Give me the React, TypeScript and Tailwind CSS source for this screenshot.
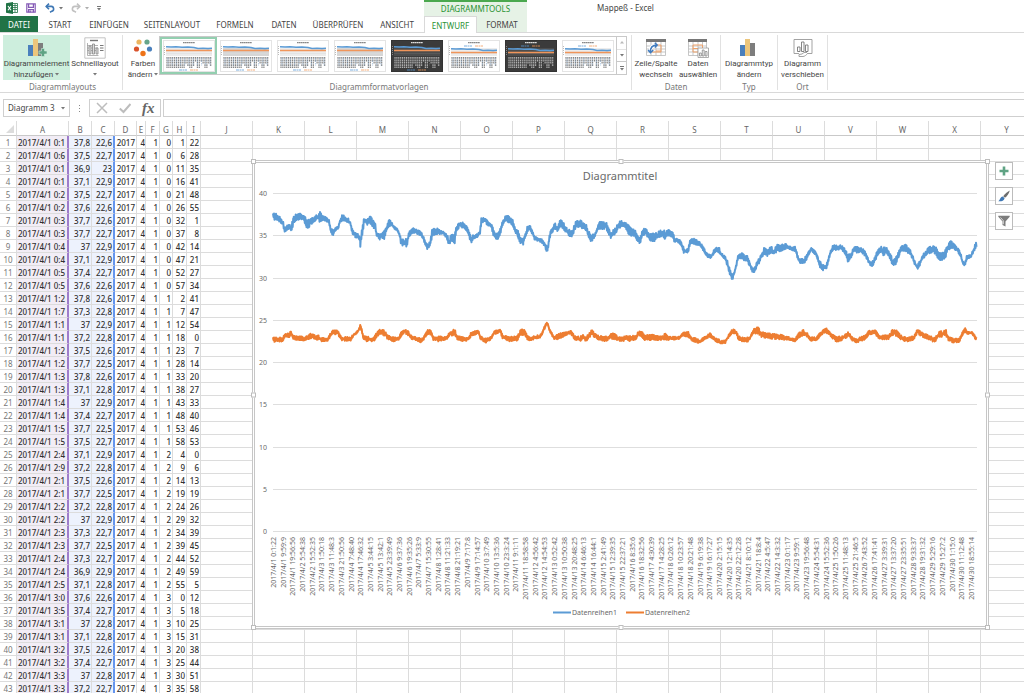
import React from 'react';
import clsx from 'clsx';

type Point = [number, number, number];

const TABS = [
    { label: 'START', width: 'w-11' },
    { label: 'EINFÜGEN', width: 'w-[54px]' },
    { label: 'SEITENLAYOUT', width: 'w-[72px]' },
    { label: 'FORMELN', width: 'w-[54px]' },
    { label: 'DATEN', width: 'w-11' },
    { label: 'ÜBERPRÜFEN', width: 'w-16' },
    { label: 'ANSICHT', width: 'w-[54px]' },
];

// Temperature, second temperature, hour, minute, second
const READINGS = `37,8 22,6 0 1 22|37,5 22,7 0 6 28|36,9 23 0 11 35|37,1 22,9 0 16 41|37,5 22,7 0 21 48
37,6 22,6 0 26 55|37,7 22,6 0 32 1|37,7 22,7 0 37 8|37 22,9 0 42 14|37,1 22,9 0 47 21
37,4 22,7 0 52 27|37,6 22,6 0 57 34|37,8 22,6 1 2 41|37,3 22,8 1 7 47|37 22,9 1 12 54
37,2 22,8 1 18 0|37,5 22,6 1 23 7|37,7 22,5 1 28 14|37,8 22,6 1 33 20|37,1 22,8 1 38 27
37 22,9 1 43 33|37,4 22,7 1 48 40|37,7 22,5 1 53 46|37,5 22,7 1 58 53|37,1 22,9 2 4 0
37,2 22,8 2 9 6|37,5 22,6 2 14 13|37,7 22,5 2 19 19|37,2 22,8 2 24 26|37 22,9 2 29 32
37,3 22,7 2 34 39|37,7 22,5 2 39 45|37,3 22,7 2 44 52|36,9 22,9 2 49 59|37,1 22,8 2 55 5
37,6 22,6 3 0 12|37,4 22,7 3 5 18|37 22,8 3 10 25|37,1 22,8 3 15 31|37,5 22,6 3 20 38
37,4 22,7 3 25 44|37 22,8 3 30 51|37,2 22,7 3 35 58`
    .split(/[|\n]/)
    .map((row) => row.split(' '));

const DATA_COLUMNS = [
    { name: 'A', width: 'w-[52px]' },
    { name: 'B', width: 'w-[23px]' },
    { name: 'C', width: 'w-[23px]' },
    { name: 'D', width: 'w-[22px]' },
    { name: 'E', width: 'w-[9px]' },
    { name: 'F', width: 'w-[14px]' },
    { name: 'G', width: 'w-[13px]' },
    { name: 'H', width: 'w-[14px]' },
    { name: 'I', width: 'w-[14px]' },
];

const EMPTY_COLUMNS = [...'JKLMNOPQRSTUVWXY'];

const TIMES = [
    '1 0:1:22', '1 9:59:9', '1 19:56:56', '2 5:54:38', '2 15:52:35', '3 1:50:18', '3 11:48:3', '3 21:50:56',
    '4 7:48:40', '4 17:46:32', '5 3:44:15', '5 13:42:1', '5 23:39:49', '6 9:37:36', '6 19:35:26', '7 5:33:9',
    '7 15:30:55', '8 1:28:41', '8 11:21:33', '8 21:19:21', '9 7:17:8', '9 17:14:57', '10 3:7:49', '10 13:5:36',
    '10 23:3:24', '11 9:1:11', '11 18:58:58', '12 4:56:42', '12 14:54:53', '13 0:52:42', '13 10:50:38',
    '13 20:48:25', '14 6:46:13', '14 16:44:1', '15 2:41:49', '15 12:39:35', '15 22:37:21', '16 8:35:6',
    '16 18:32:56', '17 4:30:39', '17 14:28:25', '18 0:26:12', '18 10:23:57', '18 20:21:48', '19 6:19:38',
    '19 16:17:27', '20 2:15:15', '20 12:14:35', '20 22:12:28', '21 8:10:12', '21 18:8:4', '22 4:5:47',
    '22 14:3:32', '23 0:1:17', '23 9:59:1', '23 19:56:48', '24 5:54:31', '24 15:52:36', '25 1:50:26',
    '25 11:48:13', '25 21:46:5', '26 7:43:52', '26 17:41:41', '27 3:39:31', '27 13:37:20', '27 23:35:51',
    '28 9:33:37', '28 19:31:32', '29 5:29:16', '29 15:27:2', '30 1:15:0', '30 11:12:48', '30 18:55:14',
];

// Each entry is x:high,low. The readings swing between high and low.
const SERIES_1_A =
    '69:190,208 80:190,212 90:200,216 98:212,224 104:228,250 112:225,240 120:224,235 125:222,250 130:200,220 137:192,212 148:190,208 160:192,208 168:200,234 176:208,234 184:206,225 190:202,215 200:195,212 207:182,218 214:192,212 222:196,210 230:204,216 237:210,225 242:236,248 250:240,258 256:234,242 264:230,238 270:205,220 278:192,212 286:202,214 296:206,218 302:216,232 308:240,252 316:248,262 324:250,264 329:258,270 331:270,294 334:255,272 337:225,255 343:202,222 352:200,224 362:200,220 370:212,234 376:222,236 380:248,258 390:254,270 398:248,264 404:240,268 410:226,238 418:208,228 426:218,230 434:230,238 442:236,242 448:244,262 453:266,284 460:268,288 470:266,290 476:246,266 484:232,252 492:234,248 502:240,252 512:244,256 518:254,264 524:268,280 532:282,298 540:272,292 546:240,262 554:234,254 562:230,252 572:238,252 582:244,254 590:254,264 597:264,288 604:254,270 614:254,280 618:232,252 624:218,238 632:214,232 642:220,234 652:232,244 658:248,262 663:260,280 670:254,266 684:252,260 690:240,252 694:204,222 704:200,220 714:210,226 724:222,232 732:240,264 738:252,272 746:246,266 752:230,248 758:212,226 764:200,216 770:194,214 778:200,218 788:210,226 796:238,248 804:242,262 812:264,284 820:262,284 826:244,262 832:230,246 838:224,238 846:236,250 852:256,268 862:262,272 872:266,276 880:268,282 888:286,303 893:288,303 897:264,280 902:240,252 908:236,246 914:216,236 922:230,250 931:210,230 940:216,236 948:232,248 956:238,256 966:244,262 974:222,240 980:208,228 990:210,236 1000:218,236 1010:226,242 1016:244,264 1024:256,276 1032:252,264 1040:236,248 1048:216,236 1058:216,238 1068:216,236 1078:236,258 1084:248,268 1092:236,264 1102:222,240 1110:214,234';
const SERIES_1_B =
    '8:212,228 16:218,240 26:226,254 36:236,258 46:242,260 54:260,278 60:262,284 66:244,258 74:234,254 82:242,260 92:252,272 102:250,274 110:248,270 120:242,260 128:240,262 136:242,270 146:240,258 158:248,262 164:262,278 176:264,278 184:278,286 192:294,310 204:296,310 210:270,285 216:262,280 224:268,282 236:274,288 246:284,294 254:298,310 264:312,322 274:316,326 280:302,314 288:292,304 298:294,308 304:310,318 316:318,328 322:332,348 328:352,372 337:376,390 342:366,378 348:344,354 354:314,328 364:308,324 372:314,332 380:314,332 388:334,346 394:350,360 400:358,372 408:342,356 414:330,348 422:316,328 432:294,314 442:298,318 452:286,312 462:298,316 472:284,306 484:284,302 494:282,298 504:284,296 516:288,300 526:290,304 532:310,324 540:328,340 550:326,340 558:318,336 566:304,314 574:294,304 584:300,312 592:316,326 600:334,352 610:344,362 618:346,360 624:326,340 632:302,314 640:282,300 652:284,300 664:286,298 676:298,312 684:314,336 692:308,325 700:294,310 712:288,308 722:290,306 732:298,314 742:318,330 752:340,352 762:328,344 772:302,316 782:290,306 790:292,318 800:294,310 808:308,322 818:324,346 830:318,342 838:300,315 846:286,302 858:284,304 868:294,312 876:312,324 884:332,344 892:346,360 900:332,345 908:316,328 918:298,316 926:292,310 938:288,308 948:292,312 956:308,332 966:310,330 976:300,324 984:284,304 992:272,294 1000:280,296 1010:290,302 1020:304,316 1028:330,344 1034:336,350 1040:318,328 1054:314,320 1062:290,304 1070:274,290';
const SERIES_2_A =
    '69:562,576 100:562,574 104:549,562 118:550,562 123:540,552 128:556,566 140:558,570 165:560,572 180:550,566 195:556,566 206:556,572 215:564,574 234:564,572 240:552,564 250:540,554 264:542,552 270:556,566 280:560,574 302:562,572 308:554,562 320:544,550 326:538,544 331:522,532 335:535,545 340:558,566 350:560,574 372:562,574 380:548,560 392:536,552 404:542,558 412:556,566 430:562,574 446:562,572 453:546,560 463:536,552 474:542,556 482:556,566 500:560,572 515:566,578 524:556,564 532:540,552 544:540,554 550:560,570 565:560,574 590:558,568 597:544,560 614:538,554 622:558,568 640:562,574 655:562,572 664:546,558 685:542,550 692:558,568 708:566,578 724:560,568 733:540,554 750:536,546 758:556,566 778:560,574 802:558,572 812:538,554 824:540,556 832:558,568 845:562,574 852:556,566 870:556,564 878:542,550 886:522,532 892:514,522 898:535,542 908:552,560 914:558,570 930:550,566 940:548,560 962:542,552 974:558,568 990:560,574 1000:554,564 1008:562,574 1024:538,556 1034:550,562 1044:556,568 1065:560,574 1085:550,566 1095:552,568 1105:562,572';
const SERIES_2_B =
    '8:560,574 24:556,574 46:558,570 54:544,560 66:546,562 74:556,570 100:554,570 120:560,570 136:550,568 144:560,570 176:560,568 190:548,558 206:546,562 214:560,572 240:570,580 254:560,568 270:550,560 282:562,572 300:570,580 316:572,580 326:554,562 336:538,550 348:540,550 354:556,568 370:564,576 388:562,574 396:546,556 402:534,550 414:532,552 426:546,562 440:550,564 470:552,568 500:558,570 525:568,576 534:550,564 550:540,556 562:546,560 572:562,572 590:560,572 604:544,554 618:534,548 632:550,560 650:560,576 668:558,570 684:546,560 696:560,572 710:566,578 736:556,568 748:540,552 768:542,556 780:556,568 808:554,568 816:540,556 832:542,558 842:556,568 860:564,576 880:558,570 892:538,550 906:548,560 926:556,568 944:564,578 956:546,562 978:540,558 986:560,572 1000:566,578 1018:566,576 1028:545,555 1036:534,544 1042:546,552 1056:546,551 1066:558,568 1070:562,572';

const parse = (text: string, offset: number): Point[] =>
    text.split(' ').map((entry) => {
        const [x, range] = entry.split(':');
        const [high, low] = range.split(',').map(Number);
        return [Number(x) + offset, high, low];
    });

// Zigzag between the high and low bound, with a little repeatable noise
const trace = (points: Point[]) => {
    const out: string[] = [];
    let seed = 7;
    let up = true;
    for (let i = 0; i < points.length - 1; i++) {
        const [x0, h0, l0] = points[i];
        const [x1, h1, l1] = points[i + 1];
        for (let x = x0; x < x1; x += 1.5) {
            const t = (x - x0) / (x1 - x0);
            const high = h0 + (h1 - h0) * t;
            const low = l0 + (l1 - l0) * t;
            seed = (seed * 16807) % 2147483647;
            const noise = seed / 2147483647;
            const jitter = noise * noise * (low - high) * 0.5;
            const y = up ? high + jitter : low - jitter;
            out.push(`${(18 + x / 3).toFixed(1)},${((y - 39) / 3).toFixed(1)}`);
            up = !up;
        }
    }
    return out.join(' ');
};

const SERIES_1 = trace([...parse(SERIES_1_A, -69), ...parse(SERIES_1_B, 1041)]);
const SERIES_2 = trace([...parse(SERIES_2_A, -69), ...parse(SERIES_2_B, 1041)]);

const Caret = () => (
    <svg viewBox="0 0 4 3" className="inline-block h-[3px] w-1 shrink-0" fill="#777">
        <path d="M0 0h4L2 2.6z" />
    </svg>
);

const ExcelLogo = () => (
    <svg viewBox="0 0 12 12" className="h-3 w-3">
        <path d="M6 1.5h5.5v9H6z" fill="#fff" stroke="#217346" strokeWidth="0.8" />
        <path d="M7 3.5h4M7 5.5h4M7 7.5h4M9 2v8" stroke="#217346" strokeWidth="0.8" />
        <path d="M0 1.3 7 0v12L0 10.7z" fill="#217346" />
        <path d="M2 4l3 4.2M5 4L2 8.2" stroke="#fff" strokeWidth="1.1" />
    </svg>
);

const SaveIcon = () => (
    <svg viewBox="0 0 10 10" className="h-2.5 w-2.5" fill="none" stroke="#8459b5" strokeWidth="1.2">
        <path d="M.8.8h8.4v8.4H.8zM2.6.8v3.6h4.8V.8" />
        <path d="M2.6 9.2V6.6h4.8v2.6" />
        <path d="M3.6 7.4h1.2v1.8H3.6z" fill="#8459b5" stroke="none" />
    </svg>
);

const UndoIcon = ({ color, flip }: { color: string; flip?: boolean }) => (
    <svg viewBox="0 0 10 10" className={clsx('h-2.5 w-2.5', flip && '-scale-x-100')} fill="none" stroke={color} strokeWidth="1.6">
        <path d="M1.2 3.4h4.6a2.5 2.5 0 0 1 .6 5L5 9.2" />
        <path d="M4 .6 1.2 3.4 4 6.2" />
    </svg>
);

const BarsIcon = ({ plus }: { plus?: boolean }) => (
    <svg viewBox="0 0 20 20" className="h-5 w-5">
        <path d="M1 7h5v11H1z" fill="#4a80bd" />
        <path d="M6 1h5v17H6z" fill="#ecc67c" />
        <path d="M11 5h5v13h-5z" fill="#7d7d7d" />
        {plus && <path d="M12 13h2.5v-2.5h3V13H20v3h-2.5v2.5h-3V16H12z" fill="#5fa384" stroke="#cdeedd" strokeWidth="0.6" />}
    </svg>
);

const LayoutIcon = () => (
    <svg viewBox="0 0 22 22" className="h-[22px] w-[22px]" fill="none" stroke="#a0a0a0" strokeWidth="0.8">
        <path d="M.8.8h20.4v20.4H.8z" stroke="#b5b5b5" />
        <path d="M6 3.5h8" stroke="#777" strokeWidth="1.4" />
        <path d="M3.5 6v12.5h11M3 8.5h11M3 11h11M3 13.5h11" />
        <path d="M5 9h2v8H5zM8.5 7h2v10h-2zM12 11h2v6h-2z" fill="#ddd" stroke="#888" />
        <path d="M16 8.5h3.5M16 11h3.5M16 13.5h3.5" stroke="#777" strokeWidth="1.2" />
    </svg>
);

const ColorsIcon = () => (
    <svg viewBox="0 0 20 20" className="h-5 w-5">
        <circle cx="6" cy="4" r="2.6" fill="#ecb55f" />
        <circle cx="14" cy="4" r="2.6" fill="#66a58b" />
        <circle cx="3.5" cy="11" r="2.6" fill="#d9532c" />
        <circle cx="16.5" cy="11" r="2.6" fill="#4a80bd" />
        <circle cx="10" cy="15.5" r="2.7" fill="#ee7318" />
    </svg>
);

const SwitchIcon = () => (
    <svg viewBox="0 0 20 20" className="h-5 w-5" fill="none">
        <path d="M.5 3.5v14h19v-14M.5 8h19M.5 11h19M.5 14h19M5 4v13.5M10 4v13.5M15 4v13.5" stroke="#b9b9b9" strokeWidth="0.8" />
        <path d="M0 1h20v3H0z" fill="#777" />
        <path d="M6 7h9v7H6zM10 13h5" stroke="#f0a36a" />
        <path d="M4.5 13C4.5 9 6.500 7 11 7" stroke="#fff" strokeWidth="3.5" />
        <path d="M4.5 14.5C4 9.5 6.5 7 11 7M8.800 4.800 11.2 7 8.8 9.5M2 12l2.5 2.6L7.2 12" stroke="#3f7bbf" strokeWidth="1.5" />
    </svg>
);

const SelectDataIcon = () => (
    <svg viewBox="0 0 21 20" className="h-5 w-[21px]" fill="none">
        <path d="M.5 3.5v14h18v-14M.5 8h18M.5 11h18M.5 14h18M5 4v13.5M10 4v13.5M14.5 4v13.5" stroke="#b9b9b9" strokeWidth="0.8" />
        <path d="M0 1h19v3H0z" fill="#777" />
        <path d="M5 7h9.5v7H5zM5 10.5h9" stroke="#f0a36a" />
        <path d="M10 10h10.5v9.5H10z" fill="#fff" stroke="#999" strokeWidth="0.8" />
        <path d="M11.5 15h1.8v3h-1.8zM14.3 12h1.8v6h-1.8zM17.2 13.5H19V18h-1.8z" stroke="#777" strokeWidth="0.7" />
    </svg>
);

const MoveIcon = () => (
    <svg viewBox="0 0 20 20" className="h-5 w-5" fill="none" stroke="#999" strokeWidth="0.9">
        <path d="M6 15.5H1V1.5h18v14h-4" />
        <path d="M4.5 9H7v4.5H4.5zM8.5 4H11v9.5H8.5zM12.5 7H15v6.5h-2.5z" stroke="#777" />
        <path d="M6 18.5h4c1.5 0 3.5-1.5 5-3.5M6 18.5v-2l3-.5 2-1.5h3" />
    </svg>
);

type ThumbProps = { dark?: boolean; grey?: boolean; selected?: boolean; legendTop?: boolean; title: string };

const StyleThumb: React.FC<ThumbProps> = ({ dark, grey, selected, legendTop, title }) => {
    const shift = legendTop ? 'translate(0 2)' : undefined;
    return (
        <button
            aria-label={title}
            className={clsx('flex h-[37px] w-[57px] shrink-0 items-center justify-center', selected && 'border-2 border-[#93cfb0]')}
        >
            <svg viewBox="0 0 52 32" className="h-8 w-[52px] shrink-0" fill="none">
                <rect x="0.5" y="0.5" width="51" height="31" fill={dark ? '#3b3b3b' : '#fff'} stroke={dark ? '#333' : '#e4e4e4'} />
                <path d="M20 2.7h12" stroke={dark ? '#ddd' : '#888'} strokeWidth="1.2" strokeDasharray="1.7 0.3" />
                <path d="M3 8h46v8H3z" fill={dark ? '#4c4c4c' : grey ? '#d6d6d6' : '#ececec'} />
                <path d="M3 13.5h46" stroke={dark ? '#666' : '#ddd'} strokeWidth="0.5" />
                <path d="M1.5 6v10" stroke={dark ? '#888' : '#bbb'} strokeDasharray="1 1" />
                <path d="M3 6.7l5 .3 5-.3 6 .6 6-.3 6 .5 4 1 5-.3 5 .4 4-.3" transform={shift} stroke="#5b9bd5" strokeWidth="1.6" />
                <path d="M3 10.5h46" transform={shift} stroke="#f0955a" strokeWidth="1.4" />
                <g stroke={dark ? '#b0b0b0' : '#868686'} strokeWidth="1.2" strokeDasharray="1.8 0.6">
                    {Array.from({ length: 24 }, (_, i) => (
                        <path key={i} d={`M${4 + i * 1.9} 17v${i < 10 || i % 4 < 2 ? 11 : 5 + (i % 3) * 2}`} />
                    ))}
                </g>
                <g stroke={dark ? '#777' : '#7fa9d3'} strokeWidth="0.6" strokeDasharray="1.5 1">
                    {Array.from({ length: 11 }, (_, i) => (
                        <path key={i} d={`M${5 + i * 4.2} 18v8`} />
                    ))}
                </g>
                <path d={legendTop ? 'M16 6h8' : 'M16 30h8'} stroke="#5b9bd5" strokeWidth="0.8" strokeDasharray="3.5 0.5 1 0.5" />
                <path d={legendTop ? 'M27 6h8' : 'M27 30h8'} stroke="#f19a5c" strokeWidth="0.8" strokeDasharray="3.5 0.5 1 0.5" />
            </svg>
        </button>
    );
};

const RibbonButton = ({ icon, lines, caret, className }: { icon: React.ReactNode; lines: string[]; caret?: boolean; className?: string }) => (
    <button className={clsx('flex h-[45px] shrink-0 flex-col items-center whitespace-nowrap pt-[2px] font-[Roboto,sans-serif] leading-[11px]', className)}>
        <span className="flex h-[22px] items-center">{icon}</span>
        <span className="leading-[10px]">{lines[0]}</span>
        <span>
            {lines[1]} {caret && <Caret />}
        </span>
    </button>
);

const RibbonGroup = ({ label, className, children }: { label: string; className?: string; children: React.ReactNode }) => (
    <section aria-label={label} className={clsx('flex shrink-0 flex-col border-r border-[#e1e1e1]', className)}>
        <div className="flex">{children}</div>
        <div className="text-center leading-[14px] text-[#777]">{label}</div>
    </section>
);

const Handle = ({ className }: { className: string }) => (
    <span className={clsx('absolute h-[5px] w-[5px] border border-[#bdbdbd] bg-white', className)} />
);

const Chart = () => (
    <figure className="absolute left-[252px] top-[39px] h-[469px] w-[737px] border-[3px] border-double border-[#c6c6c6] bg-white">
        <svg viewBox="0 0 731 463" className="block h-full w-full font-['Noto_Sans',sans-serif]" fill="#6a6a6a">
            <text x="365" y="17" fontSize="11" textAnchor="middle">
                Diagrammtitel
            </text>
            {[40, 35, 30, 25, 20, 15, 10, 5, 0].map((value, i) => (
                <g key={value}>
                    <path d={`M18 ${30.5 + Math.round(i * 42.25)}h704`} stroke="#dedede" />
                    <text x="12" y={33 + Math.round(i * 42.25)} fontSize="7" textAnchor="end">
                        {value}
                    </text>
                </g>
            ))}
            <polyline points={SERIES_1} fill="none" stroke="#5b9bd5" strokeWidth="2" strokeLinejoin="round" />
            <polyline points={SERIES_2} fill="none" stroke="#ed7d31" strokeWidth="2" strokeLinejoin="round" />
            {TIMES.map((time, i) => (
                <text key={time} fontSize="7" textAnchor="end" transform={`translate(${21 + i * 9.694} 374) rotate(-90)`}>
                    2017/4/{time}
                </text>
            ))}
            <path d="M298 449.5h18" stroke="#5b9bd5" strokeWidth="2" />
            <text x="317" y="452" fontSize="7">Datenreihen1</text>
            <path d="M371 449.5h18" stroke="#ed7d31" strokeWidth="2" />
            <text x="390" y="452" fontSize="7">Datenreihen2</text>
        </svg>
        <Handle className="-left-1 -top-1" />
        <Handle className="-top-1 left-1/2 -translate-x-1/2" />
        <Handle className="-right-1 -top-1" />
        <Handle className="-left-1 top-1/2 -translate-y-1/2" />
        <Handle className="-right-1 top-1/2 -translate-y-1/2" />
        <Handle className="-bottom-1 -left-1" />
        <Handle className="-bottom-1 left-1/2 -translate-x-1/2" />
        <Handle className="-bottom-1 -right-1" />
    </figure>
);

const ChartTools = () => {
    const button = 'flex h-[18px] w-[18px] items-center justify-center border border-[#bcbcbc] bg-white';
    return (
        <div className="absolute left-[995px] top-[41px] flex flex-col gap-[7px]">
            <button aria-label="Diagrammelemente" className={button}>
                <svg viewBox="0 0 10 10" className="h-2.5 w-2.5">
                    <path d="M3.7.5h2.6v3.2h3.2v2.6H6.3v3.2H3.7V6.3H.5V3.7h3.2z" fill="#5fa384" />
                </svg>
            </button>
            <button aria-label="Diagrammformatvorlagen" className={button}>
                <svg viewBox="0 0 12 12" className="h-3 w-3">
                    <path d="M11.8.5C11 4 9 6 7 7.8L5.2 6.2C7 4 9 2 11.8.5z" fill="#6d6d6d" />
                    <path d="M4.8 6.5 6.6 8.2C6 11 3 11.5.3 11.2 2 10.5 2 7 4.8 6.5z" fill="#3f78b5" />
                </svg>
            </button>
            <button aria-label="Diagrammfilter" className={button}>
                <svg viewBox="0 0 12 12" className="h-3 w-3">
                    <path d="M.3.8h11.4v1L7.5 6.500v5l-3-1.5V6.500L.3 1.8z" fill="#7d7d7d" />
                    <path d="M2.5 2.5 5.3 5.7v3.5" stroke="#fff" strokeWidth="0.7" fill="none" />
                </svg>
            </button>
        </div>
    );
};

const Sheet = () => {
    const head = 'h-[15px] overflow-hidden border-b border-r border-b-[#c9c9c9] border-r-[#dcdcdc] p-0 pt-[2px] font-normal text-[#666]';
    const cell = 'h-[13px] overflow-hidden whitespace-nowrap border-b border-r border-[#dcdcdc] p-0 pt-px';
    return (
        <main className="relative flex-1 overflow-hidden">
            <table className="w-full table-fixed border-separate border-spacing-0 text-right leading-[11px]">
                <thead>
                    <tr className="text-center">
                        <th className={clsx(head, 'w-[17px]')}>
                            <svg viewBox="0 0 8 8" className="ml-auto mr-[2px] h-2 w-2">
                                <path d="M8 0v8H0z" fill="#dcdcdc" />
                            </svg>
                        </th>
                        {DATA_COLUMNS.map(({ name, width }) => (
                            <th key={name} className={clsx(head, width)}>{name}</th>
                        ))}
                        {EMPTY_COLUMNS.map((name) => (
                            <th key={name} className={clsx(head, 'w-[52px]')}>{name}</th>
                        ))}
                        <th className={head} />
                    </tr>
                </thead>
                <tbody className="font-medium text-[#303030]">
                    {READINGS.map(([first, second, hour, minute, sec], i) => (
                        <tr key={i}>
                            <th className={clsx(cell, 'text-center font-normal text-[#777]')}>{i + 1}</th>
                            <td
                                title={`2017/4/1 ${hour}:${minute}:${sec}`}
                                className={clsx(cell, 'border-r-2 border-r-[#9f7ccb] bg-[#f2edf6] pl-px text-left')}
                            >
                                {`2017/4/1 ${hour}:${minute}`.slice(0, 12)}
                            </td>
                            <td className={clsx(cell, 'bg-[#edf2fd] pr-px')}>{first}</td>
                            <td className={clsx(cell, 'border-r-2 border-r-[#6495ee] bg-[#edf2fd] pr-px')}>{second}</td>
                            <td className={clsx(cell, 'pr-px')}>2017</td>
                            <td className={cell}>4</td>
                            <td className={clsx(cell, 'pr-px')}>1</td>
                            <td className={clsx(cell, 'pr-px')}>{hour}</td>
                            <td className={clsx(cell, 'pr-px')}>{minute}</td>
                            <td className={clsx(cell, 'pr-px')}>{sec}</td>
                            {EMPTY_COLUMNS.map((name) => (
                                <td key={name} className={cell} />
                            ))}
                            <td className={cell} />
                        </tr>
                    ))}
                </tbody>
            </table>
            <Chart />
            <ChartTools />
        </main>
    );
};

const TitleBar = () => (
    <div className="flex h-4 shrink-0">
        <div className="flex w-[424px] shrink-0 items-center pl-[6px]">
            <ExcelLogo />
            <button aria-label="Speichern" className="ml-2"><SaveIcon /></button>
            <button aria-label="Rückgängig" className="ml-[9px] flex items-center gap-1"><UndoIcon color="#3f78b5" /><Caret /></button>
            <button aria-label="Wiederholen" className="ml-2 flex items-center gap-1 opacity-60"><UndoIcon color="#999" flip /><Caret /></button>
            <button aria-label="Schnellzugriff anpassen" className="ml-2 flex flex-col items-center gap-px">
                <span className="h-px w-1 bg-[#777]" />
                <Caret />
            </button>
        </div>
        <div className="w-[103px] shrink-0 border-t-2 border-[#4aa84e] bg-[#e6f2e6] text-center leading-[13px] text-[#2a9233]">DIAGRAMMTOOLS</div>
        <h1 className="pl-[70px] leading-4">Mappeß - Excel</h1>
    </div>
);

const Tabs = () => (
    <nav className="flex h-[17px] shrink-0 border-b border-[#d9d9d9] leading-[17px]">
        <button className="w-[38px] bg-[#217346] text-white">DATEI</button>
        {TABS.map(({ label, width }) => (
            <button key={label} className={width}>{label}</button>
        ))}
        <button className="-mb-px w-[53px] border-x border-t border-[#d9d9d9] bg-white text-[#2a9233]">ENTWURF</button>
        <button className="w-[50px] bg-[#e6f2e6]">FORMAT</button>
    </nav>
);

const Ribbon = () => (
    <div className="flex h-[60px] shrink-0 overflow-hidden border-b border-[#d9d9d9] pb-[2px] pt-[2px]">
        <RibbonGroup label="Diagrammlayouts" className="w-[123px] pl-[3px]">
            <RibbonButton icon={<BarsIcon plus />} lines={['Diagrammelement', 'hinzufügen']} caret className="w-[67px] bg-[#cdeedd]" />
            <RibbonButton icon={<LayoutIcon />} lines={['Schnelllayout', '']} caret className="w-[50px]" />
        </RibbonGroup>
        <RibbonGroup label="Diagrammformatvorlagen" className="w-[509px] pl-1">
            <RibbonButton icon={<ColorsIcon />} lines={['Farben', 'ändern']} caret className="w-[32px]" />
            <div className="mt-px flex h-[39px] border border-[#c9c9c9]">
                <StyleThumb title="Formatvorlage 1" selected />
                <StyleThumb title="Formatvorlage 2" grey />
                <StyleThumb title="Formatvorlage 3" />
                <StyleThumb title="Formatvorlage 4" grey />
                <StyleThumb title="Formatvorlage 5" dark />
                <StyleThumb title="Formatvorlage 6" legendTop />
                <StyleThumb title="Formatvorlage 7" dark legendTop />
                <StyleThumb title="Formatvorlage 8" legendTop />
                <div className="flex w-[10px] flex-col divide-y divide-[#c9c9c9] border-l border-[#c9c9c9]">
                    <button aria-label="Nach oben" className="flex flex-1 items-center justify-center opacity-50">
                        <svg viewBox="0 0 4 3" className="h-[3px] w-1" fill="#777"><path d="M0 2.6h4L2 0z" /></svg>
                    </button>
                    <button aria-label="Nach unten" className="flex flex-1 items-center justify-center"><Caret /></button>
                    <button aria-label="Weitere" className="flex flex-1 flex-col items-center justify-center gap-px">
                        <span className="h-px w-1 bg-[#777]" />
                        <Caret />
                    </button>
                </div>
            </div>
        </RibbonGroup>
        <RibbonGroup label="Daten" className="w-[89px]">
            <RibbonButton icon={<SwitchIcon />} lines={['Zeile/Spalte', 'wechseln']} className="w-12" />
            <RibbonButton icon={<SelectDataIcon />} lines={['Daten', 'auswählen']} className="w-9" />
        </RibbonGroup>
        <RibbonGroup label="Typ" className="w-[57px]">
            <RibbonButton icon={<BarsIcon />} lines={['Diagrammtyp', 'ändern']} className="w-14" />
        </RibbonGroup>
        <RibbonGroup label="Ort" className="w-[50px]">
            <RibbonButton icon={<MoveIcon />} lines={['Diagramm', 'verschieben']} className="w-[49px]" />
        </RibbonGroup>
    </div>
);

const FormulaBar = () => (
    <div className="flex h-7 shrink-0 pb-1 pt-[6px]">
        <div className="ml-[3px] flex w-[67px] items-center border border-[#cfcfcf] pr-1">
            <input aria-label="Namenfeld" defaultValue="Diagramm 3" className="w-full min-w-0 pl-1 outline-none" />
            <Caret />
        </div>
        <div className="flex w-[19px] flex-col items-center justify-center gap-[2px]">
            <span className="h-px w-px bg-[#888]" />
            <span className="h-px w-px bg-[#888]" />
            <span className="h-px w-px bg-[#888]" />
        </div>
        <div className="flex w-[72px] items-center justify-around border border-[#cfcfcf]">
            <button aria-label="Abbrechen">
                <svg viewBox="0 0 12 12" className="h-3 w-3" fill="none" stroke="#bdbdbd" strokeWidth="1.5"><path d="M1 1l10 10M11 1 1 11" /></svg>
            </button>
            <button aria-label="Eingeben">
                <svg viewBox="0 0 12 12" className="h-3 w-3" fill="none" stroke="#bdbdbd" strokeWidth="2"><path d="M.8 6.5 4.5 10 11.5 2" /></svg>
            </button>
            <button aria-label="Funktion einfügen" className="font-['Liberation_Serif',serif] text-[15px] font-bold italic leading-4 text-[#666]">fx</button>
        </div>
        <input aria-label="Bearbeitungsleiste" className="ml-[2px] min-w-0 flex-1 border border-r-0 border-[#cfcfcf] outline-none" />
    </div>
);

export default function App() {
    return (
        <div className="flex h-screen flex-col overflow-hidden bg-white font-['Noto_Sans','Open_Sans',sans-serif] text-[8px] text-[#444]">
            <TitleBar />
            <Tabs />
            <Ribbon />
            <FormulaBar />
            <Sheet />
        </div>
    );
}
